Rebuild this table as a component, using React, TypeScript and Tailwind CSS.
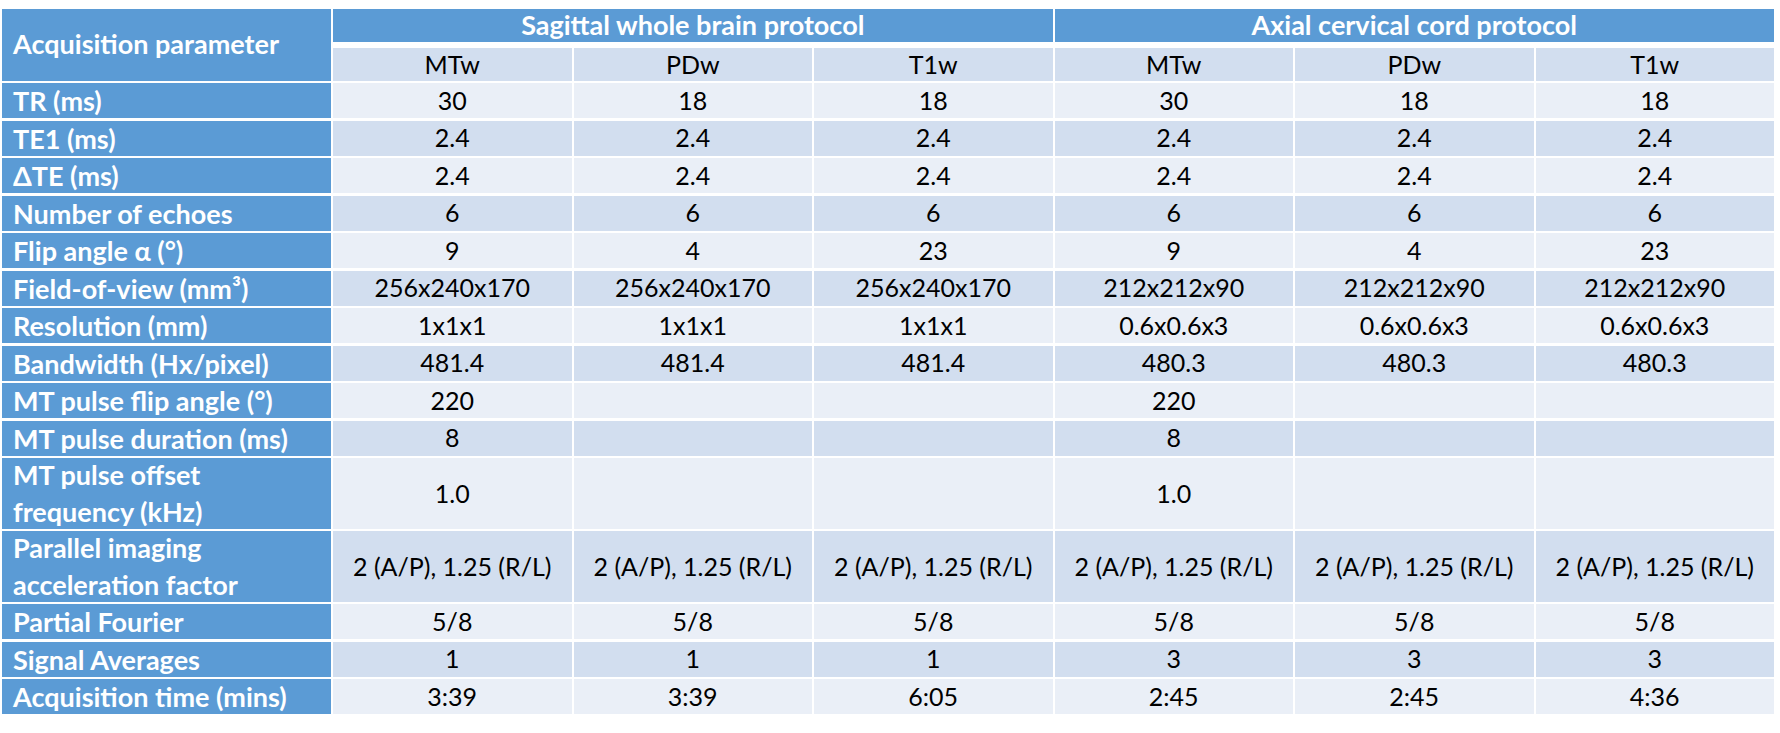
import React from "react"

type Row = { label: React.ReactNode; vals: string[]; tall?: boolean }

const rows: Row[] = [
  { label: "TR (ms)", vals: ["30", "18", "18", "30", "18", "18"] },
  { label: "TE1 (ms)", vals: ["2.4", "2.4", "2.4", "2.4", "2.4", "2.4"] },
  { label: "ΔTE (ms)", vals: ["2.4", "2.4", "2.4", "2.4", "2.4", "2.4"] },
  { label: "Number of echoes", vals: ["6", "6", "6", "6", "6", "6"] },
  { label: "Flip angle α (°)", vals: ["9", "4", "23", "9", "4", "23"] },
  {
    label: "Field-of-view (mm³)",
    vals: ["256x240x170", "256x240x170", "256x240x170", "212x212x90", "212x212x90", "212x212x90"],
  },
  { label: "Resolution (mm)", vals: ["1x1x1", "1x1x1", "1x1x1", "0.6x0.6x3", "0.6x0.6x3", "0.6x0.6x3"] },
  { label: "Bandwidth (Hx/pixel)", vals: ["481.4", "481.4", "481.4", "480.3", "480.3", "480.3"] },
  { label: "MT pulse flip angle (°)", vals: ["220", "", "", "220", "", ""] },
  { label: "MT pulse duration (ms)", vals: ["8", "", "", "8", "", ""] },
  {
    label: (
      <>
        MT pulse offset
        <br />
        frequency (kHz)
      </>
    ),
    vals: ["1.0", "", "", "1.0", "", ""],
    tall: true,
  },
  {
    label: (
      <>
        Parallel imaging
        <br />
        acceleration factor
      </>
    ),
    vals: Array(6).fill("2 (A/P), 1.25 (R/L)"),
    tall: true,
  },
  { label: "Partial Fourier", vals: ["5/8", "5/8", "5/8", "5/8", "5/8", "5/8"] },
  { label: "Signal Averages", vals: ["1", "1", "1", "3", "3", "3"] },
  { label: "Acquisition time (mins)", vals: ["3:39", "3:39", "6:05", "2:45", "2:45", "4:36"] },
]

const cols = "grid grid-cols-[329px_repeat(6,minmax(0,1fr))] gap-x-[2px]"

export default function App() {
  return (
    <div className="min-h-screen bg-white pt-[9px] pl-[2px] font-['Lato','Open_Sans',sans-serif] text-[25px] text-black">
      <div className="w-[1772px]">
        {/* header */}
        <div className={`${cols} grid-rows-[33px_33px] gap-y-[6px]`}>
          <div className="row-span-2 flex items-center bg-[#5b9bd5] pl-[11px] pb-[2px] text-[27px] font-bold text-white">
            Acquisition parameter
          </div>
          <div className="col-span-3 flex items-center justify-center bg-[#5b9bd5] text-[27px] font-bold text-white">
            Sagittal whole brain protocol
          </div>
          <div className="col-span-3 flex items-center justify-center bg-[#5b9bd5] text-[27px] font-bold text-white">
            Axial cervical cord protocol
          </div>
          {["MTw", "PDw", "T1w", "MTw", "PDw", "T1w"].map((s, i) => (
            <div key={i} className="flex items-center justify-center bg-[#d2deef]">
              {s}
            </div>
          ))}
        </div>

        {/* body */}
        <div className="mt-[2px] flex flex-col gap-y-[2.5px]">
          {rows.map((r, ri) => {
            const bg = ri % 2 === 0 ? "bg-[#eaeff7]" : "bg-[#d2deef]"
            const h = r.tall ? "h-[70.5px]" : "h-[35px]"
            return (
              <div key={ri} className={cols}>
                <div
                  className={`${h} flex items-center bg-[#5b9bd5] pl-[11px] text-[27px] font-bold leading-[37px] text-white`}
                >
                  <span>{r.label}</span>
                </div>
                {r.vals.map((v, vi) => (
                  <div key={vi} className={`${h} ${bg} flex items-center justify-center whitespace-nowrap`}>
                    {v}
                  </div>
                ))}
              </div>
            )
          })}
        </div>
      </div>
    </div>
  )
}
